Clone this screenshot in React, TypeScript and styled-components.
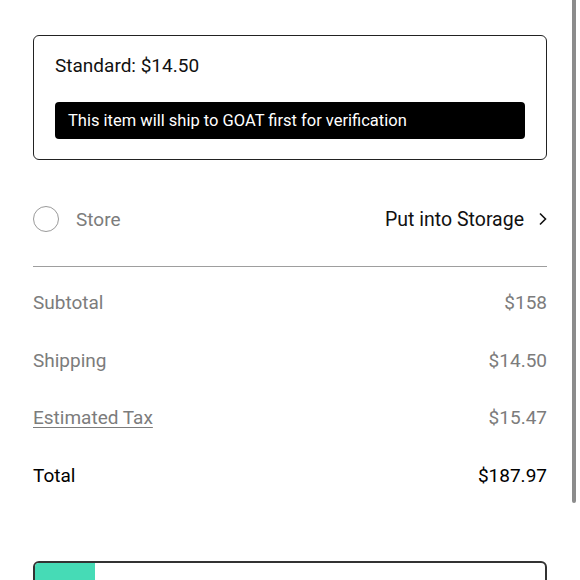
import React from 'react';
import styled, { createGlobalStyle } from 'styled-components';

const GlobalStyle = createGlobalStyle`
    html, body {
        margin: 0;
        padding: 0;
        background: #ffffff;
        overflow: hidden;
    }
    body {
        font-family: Roboto, 'Liberation Sans', Arial, sans-serif;
        color: #111;
        -webkit-font-smoothing: antialiased;
    }
`;

const summary = [
    { label: 'Subtotal', value: '$158' },
    { label: 'Shipping', value: '$14.50' },
    { label: 'Estimated Tax', value: '$15.47', link: true },
    { label: 'Total', value: '$187.97', strong: true },
];

const App = () => {
    return (
        <>
            <GlobalStyle />
            <Page>
                <ShippingCard>
                    <ShippingTitle>Standard: $14.50</ShippingTitle>
                    <Notice>This item will ship to GOAT first for verification</Notice>
                </ShippingCard>

                <StoreRow>
                    <Radio />
                    <StoreLabel>Store</StoreLabel>
                    <StorageLink>
                        Put into Storage
                        <svg width="9" height="14" viewBox="0 0 9 14" fill="none">
                            <polyline points="2,1.5 7.5,7 2,12.5" stroke="#111" strokeWidth="1.6" />
                        </svg>
                    </StorageLink>
                </StoreRow>

                <Divider />

                <SummaryList>
                    {summary.map((row) => (
                        <SummaryRow key={row.label} $strong={row.strong}>
                            <SummaryLabel $link={row.link}>{row.label}</SummaryLabel>
                            <span>{row.value}</span>
                        </SummaryRow>
                    ))}
                </SummaryList>

                <PayCard>
                    <PayProgress />
                </PayCard>
            </Page>
            <ScrollThumb />
        </>
    );
};

const Page = styled.div`
    width: 580px;
    height: 580px;
    box-sizing: border-box;
    padding: 35px 33px 0 33px;
    overflow: hidden;
`;

const ShippingCard = styled.div`
    border: 1.5px solid #222;
    border-radius: 6px;
    padding: 18px 21px 20px 21px;
    height: 125px;
    box-sizing: border-box;
    display: flex;
    flex-direction: column;
    justify-content: space-between;
`;

const ShippingTitle = styled.div`
    font-size: 19px;
    line-height: 24px;
    color: #111;
`;

const Notice = styled.div`
    background: #000;
    color: #fff;
    border-radius: 4px;
    height: 37px;
    display: flex;
    align-items: center;
    padding: 0 13px;
    font-size: 16.5px;
`;

const StoreRow = styled.div`
    margin-top: 30px;
    height: 58px;
    display: flex;
    align-items: center;
`;

const Radio = styled.span`
    width: 26px;
    height: 26px;
    box-sizing: border-box;
    border-radius: 50%;
    border: 1px solid #9a9a9a;
    flex-shrink: 0;
`;

const StoreLabel = styled.span`
    margin-left: 17px;
    font-size: 19px;
    color: #7c7c7c;
`;

const StorageLink = styled.span`
    margin-left: auto;
    display: flex;
    align-items: center;
    gap: 14px;
    font-size: 19.5px;
    color: #111;
`;

const Divider = styled.div`
    margin-top: 18px;
    height: 1px;
    background: #9e9e9e;
`;

const SummaryList = styled.div`
    padding-top: 7px;
    display: flex;
    flex-direction: column;
`;

const SummaryRow = styled.div<{ $strong?: boolean }>`
    height: 57.6px;
    display: flex;
    align-items: center;
    justify-content: space-between;
    font-size: 19px;
    color: ${(p) => (p.$strong ? '#000' : '#7c7c7c')};
`;

const SummaryLabel = styled.span<{ $link?: boolean }>`
    text-decoration: ${(p) => (p.$link ? 'underline' : 'none')};
    text-decoration-thickness: 1px;
    text-underline-offset: 3px;
`;

const PayCard = styled.div`
    margin-top: 57px;
    height: 60px;
    border: 2px solid #333;
    border-radius: 6px;
    overflow: hidden;
    display: flex;
`;

const PayProgress = styled.div`
    width: 60px;
    background: #46dbb6;
`;

const ScrollThumb = styled.div`
    position: fixed;
    top: 0;
    right: 4px;
    width: 4px;
    height: 503px;
    background: #8c8c8c;
    border-radius: 0 0 2px 2px;
`;

export default App;
